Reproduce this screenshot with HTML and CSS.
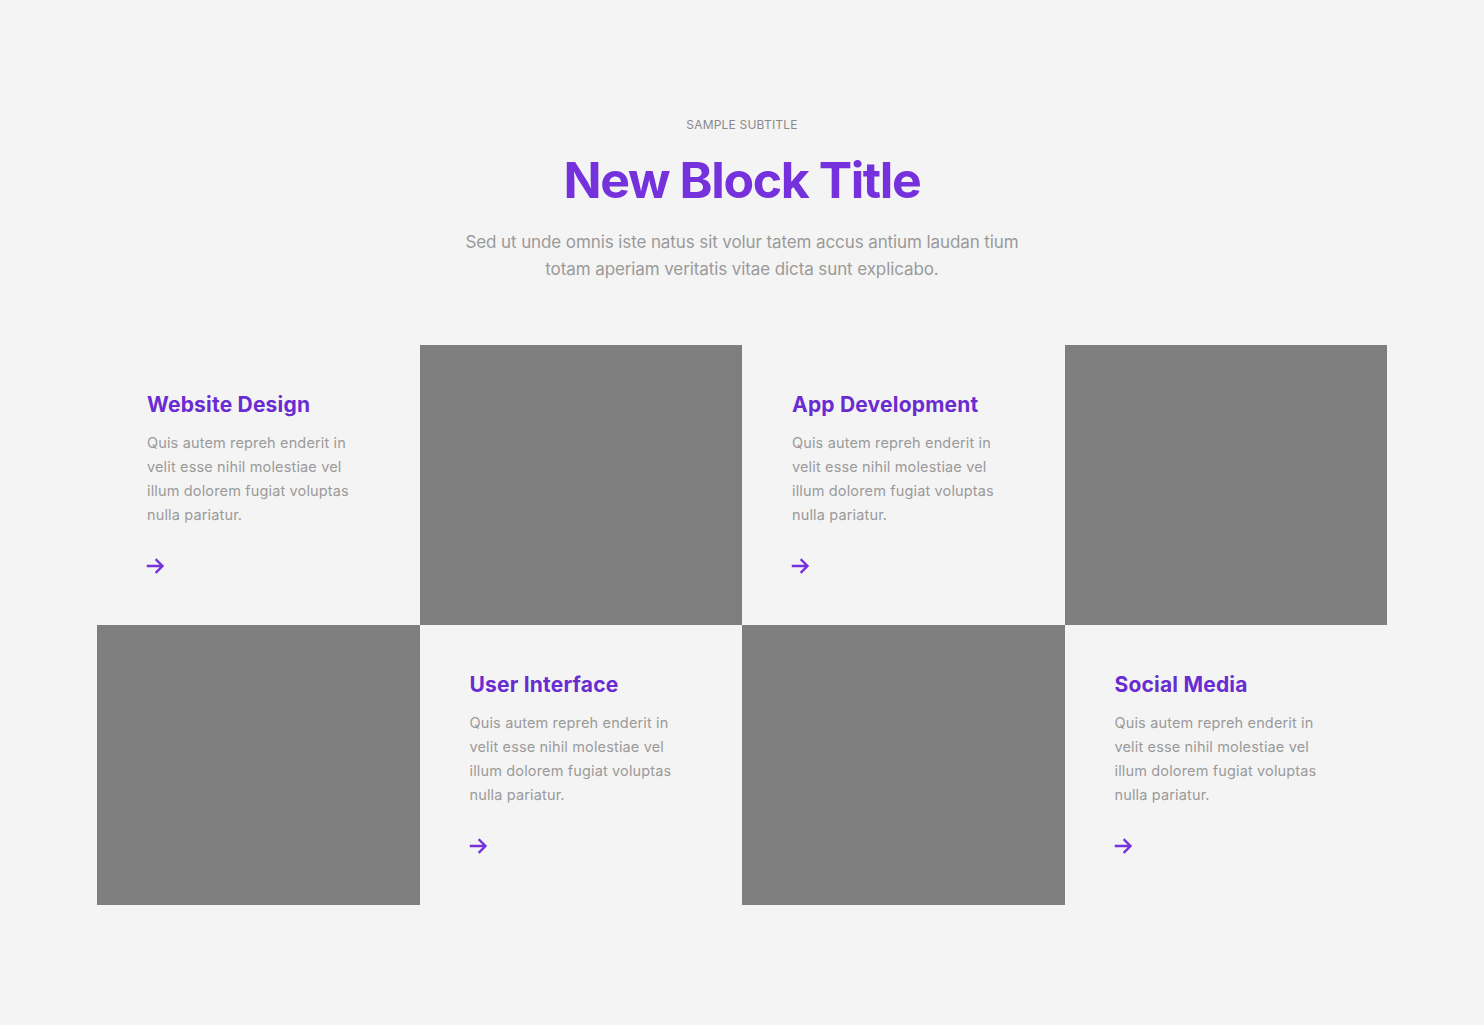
FILE: index.html
```html
<!DOCTYPE html>
<html lang="en">
<head>
<meta charset="utf-8">
<title>New Block Title</title>
<link rel="stylesheet" href="styles.css">
</head>
<body>
<section class="block">
  <header class="head">
    <p class="subtitle">SAMPLE SUBTITLE</p>
    <h1 class="title">New Block Title</h1>
    <p class="lead">Sed ut unde omnis iste natus sit volur tatem accus antium laudan tium totam aperiam veritatis vitae dicta sunt explicabo.</p>
  </header>
  <div class="grid">
    <article class="card">
      <h2 class="card-title">Website Design</h2>
      <p class="card-text">Quis autem repreh enderit in velit esse nihil molestiae vel illum dolorem fugiat voluptas nulla pariatur.</p>
      <a class="arrow" href="#"><svg width="20" height="20" viewBox="0 0 20 20" fill="none" stroke="#7431dc" stroke-width="2.4" stroke-linecap="square"><path d="M2 10h14M10.5 4l6 6-6 6"/></svg></a>
    </article>
    <div class="img"></div>
    <article class="card">
      <h2 class="card-title">App Development</h2>
      <p class="card-text">Quis autem repreh enderit in velit esse nihil molestiae vel illum dolorem fugiat voluptas nulla pariatur.</p>
      <a class="arrow" href="#"><svg width="20" height="20" viewBox="0 0 20 20" fill="none" stroke="#7431dc" stroke-width="2.4" stroke-linecap="square"><path d="M2 10h14M10.5 4l6 6-6 6"/></svg></a>
    </article>
    <div class="img"></div>
    <div class="img"></div>
    <article class="card">
      <h2 class="card-title">User Interface</h2>
      <p class="card-text">Quis autem repreh enderit in velit esse nihil molestiae vel illum dolorem fugiat voluptas nulla pariatur.</p>
      <a class="arrow" href="#"><svg width="20" height="20" viewBox="0 0 20 20" fill="none" stroke="#7431dc" stroke-width="2.4" stroke-linecap="square"><path d="M2 10h14M10.5 4l6 6-6 6"/></svg></a>
    </article>
    <div class="img"></div>
    <article class="card">
      <h2 class="card-title">Social Media</h2>
      <p class="card-text">Quis autem repreh enderit in velit esse nihil molestiae vel illum dolorem fugiat voluptas nulla pariatur.</p>
      <a class="arrow" href="#"><svg width="20" height="20" viewBox="0 0 20 20" fill="none" stroke="#7431dc" stroke-width="2.4" stroke-linecap="square"><path d="M2 10h14M10.5 4l6 6-6 6"/></svg></a>
    </article>
  </div>
</section>
</body>
</html>
```

FILE: styles.css
```css
* { box-sizing: border-box; }
html, body { margin: 0; padding: 0; }
body {
  background: #f4f4f4;
  font-family: Inter, "Noto Sans", "Liberation Sans", sans-serif;
  color: #9a9a9a;
}
.block {
  padding: 117px 97px 120px;
}
.head {
  text-align: center;
  display: flex;
  flex-direction: column;
  align-items: center;
}
.subtitle {
  margin: 0;
  font-size: 12px;
  line-height: 16px;
  color: #8a8a8a;
  letter-spacing: 0.2px;
}
.title {
  margin: 17px 0 0;
  font-size: 50px;
  line-height: 60px;
  font-weight: 700;
  letter-spacing: -1.4px;
  color: #7431dc;
}
.lead {
  margin: 19px 0 0;
  width: 570px;
  font-size: 17px;
  line-height: 27px;
  color: #9a9a9a;
  letter-spacing: -0.1px;
}
.grid {
  margin-top: 62px;
  display: grid;
  grid-template-columns: repeat(4, 1fr);
  grid-auto-rows: 280px;
}
.img { background: #7e7e7e; }
.card {
  padding: 46px 50px 0;
  display: flex;
  flex-direction: column;
  align-items: flex-start;
}
.card-title {
  margin: 0;
  font-size: 21px;
  line-height: 28px;
  font-weight: 700;
  letter-spacing: 0.2px;
  color: #6a2cd0;
}
.card-text {
  margin: 12px 0 0;
  font-size: 14.5px;
  line-height: 24px;
  color: #9a9a9a;
  letter-spacing: 0.15px;
  max-width: 225px;
}
.arrow {
  margin-top: 29px;
  display: block;
  line-height: 0;
  margin-left: -1px;
}
```
